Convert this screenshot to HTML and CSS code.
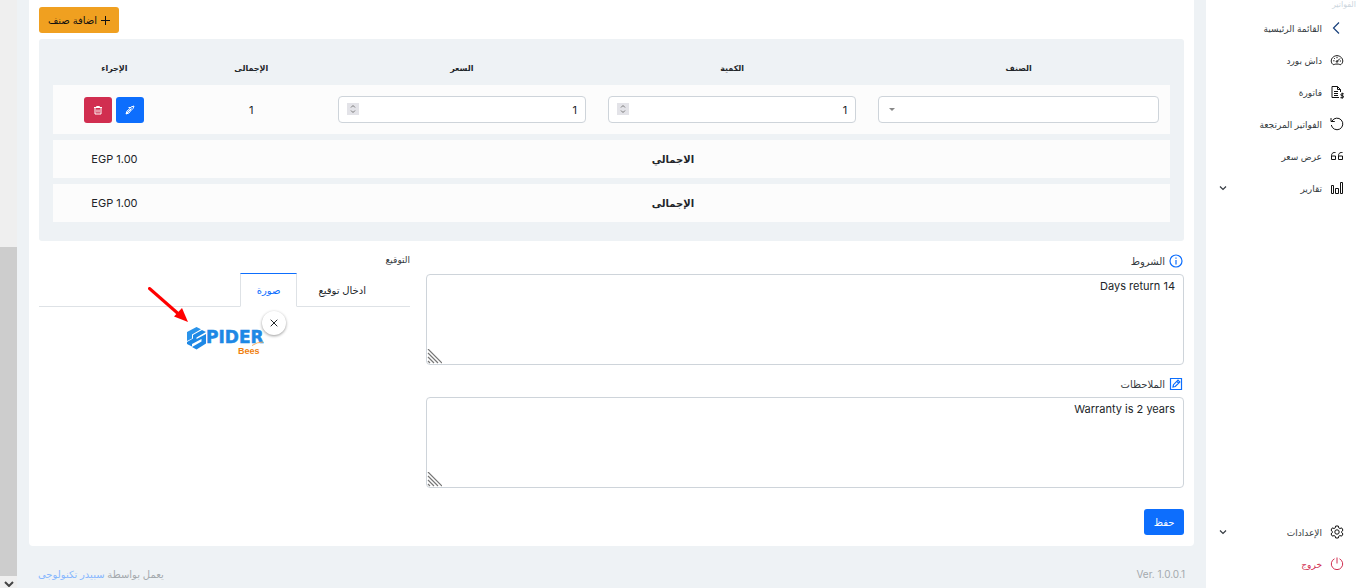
FILE: index.html
```html
<!DOCTYPE html>
<html lang="ar" dir="rtl">
<head>
<meta charset="utf-8">
<title>فاتورة</title>
<link rel="stylesheet" href="styles.css">
</head>
<body>
<aside class="sidebar">
  <p class="sidebar-title">الفواتير</p>
  <nav class="nav">
    <a class="nav-link" href="#"><svg class="icon blue" viewBox="0 0 14 14"><path d="M9 1.500L3.500 7 9 12.500"/></svg><span>القائمة الرئيسية</span></a>
    <a class="nav-link" href="#"><svg class="icon" viewBox="0 0 14 14"><path d="M3 11.500C.5 9.500 1 6.300 2.500 4.700 5 2 9 2 11.500 4.700c1.500 1.600 2 4.800-.5 6.800-.8.500-1.500-.5-4-.5s-3.200 1-4 .5zM7 8.500l3-3M3.200 7.800h1.300M4.200 5.200l.8.800M7 4v1.200M9.800 8h1.200"/><circle cx="7" cy="8.500" r=".8"/></svg><span>داش بورد</span></a>
    <a class="nav-link" href="#"><svg class="icon" viewBox="0 0 14 14"><path d="M9 12.500H2v-11h5.500L10.500 4.500V7M7.500 1.500v3h3M4 6.500h4M4 8.500h4M4 10.500h4M13.800 8.800h-2c-1.300 0-1.300 1.900 0 1.900h.8c1.400 0 1.400 2 0 2h-2.200M12.200 7.700v6"/></svg><span>فاتورة</span></a>
    <a class="nav-link" href="#"><svg class="icon" viewBox="0 0 14 14"><path d="M2 4a5.800 5.800 0 1 1-.7 4M1 1v3.500h3.800"/></svg><span>الفواتير المرتجعة</span></a>
    <a class="nav-link" href="#"><svg class="icon" viewBox="0 0 14 14"><path d="M5.500 3.500H4.200C2.500 3.500 1.500 5 1.500 6.500v4h4v-3.500h-4M12.500 3.500h-1.300c-1.700 0-2.700 1.500-2.700 3v4h4v-3.500h-4"/></svg><span>عرض سعر</span></a>
    <a class="nav-link" href="#"><svg class="icon" viewBox="0 0 14 14"><path d="M1.500 4.500h2v8h-2zM5.500 7.500h3v5h-3zM10.500 1.500h2v11h-2z"/></svg><span>تقارير</span><svg class="chevron" viewBox="0 0 8 8"><path d="M1 2.500l3 3 3-3"/></svg></a>
  </nav>
  <nav class="nav nav-bottom">
    <a class="nav-link" href="#"><svg class="icon" viewBox="0 0 14 14"><path d="M5.700 1h2.600l.4 1.800 1.200.7 1.800-.6L13 5.200l-1.300 1.200v1.300L13 8.900l-1.300 2.200-1.800-.5-1.200.7-.4 1.700H5.700l-.4-1.700-1.200-.7-1.800.5L1 8.900l1.300-1.200V6.400L1 5.200l1.300-2.300 1.800.6 1.200-.7z"/><circle cx="7" cy="7" r="2.200"/></svg><span>الإعدادات</span><svg class="chevron" viewBox="0 0 8 8"><path d="M1 2.500l3 3 3-3"/></svg></a>
    <a class="nav-link danger" href="#"><svg class="icon" viewBox="0 0 14 14"><path d="M4.500 1.800a5.700 5.700 0 1 0 5 0M7 .5v6"/></svg><span>خروج</span></a>
  </nav>
</aside>

<div class="content">
  <main class="card">
    <div class="toolbar">
      <button class="btn btn-add" type="button"><svg class="icon-plus" viewBox="0 0 9 9"><path d="M4.500 0v9M0 4.500h9"/></svg>اضافة صنف</button>
    </div>
    <section class="panel">
      <table class="items">
        <thead>
          <tr><th class="col-item">الصنف</th><th class="col-num">الكمية</th><th class="col-num">السعر</th><th class="col-total">الإجمالى</th><th class="col-action">الإجراء</th></tr>
        </thead>
        <tbody>
          <tr class="item-row">
            <td><select class="field select" aria-label="الصنف"><option></option></select></td>
            <td><input class="field number" type="number" value="1" aria-label="الكمية"></td>
            <td><input class="field number" type="number" value="1" aria-label="السعر"></td>
            <td>1</td>
            <td>
              <div class="actions">
                <button class="btn btn-primary btn-icon" type="button" aria-label="تعديل"><svg class="icon-action" viewBox="0 0 10 10"><path d="M1 9l1-3 2-1.500L6 2l3-1-1 2.500L5.500 6 4 8zM3.500 2.500H6M4 4.500L5.500 6M1 9l5.500-5.500"/></svg></button>
                <button class="btn btn-danger btn-icon" type="button" aria-label="حذف"><svg class="icon-action" viewBox="0 0 10 10"><path d="M1 2.500h8M3.500 2.500v-1h3v1M2 2.500v6.500h6V2.500M4 4.500v3M6 4.500v3"/></svg></button>
              </div>
            </td>
          </tr>
          <tr class="sum-row"><th colspan="4">الاجمالي</th><td>EGP 1.00</td></tr>
          <tr class="sum-row"><th colspan="4">الإجمالى</th><td>EGP 1.00</td></tr>
        </tbody>
      </table>
    </section>

    <div class="details">
      <div class="notes">
        <label class="label" for="terms"><svg class="icon-label" viewBox="0 0 14 14"><circle cx="7" cy="7" r="6"/><path d="M7 6v4.500M7 3.500v1.200"/></svg>الشروط</label>
        <textarea class="area" id="terms">Days return 14</textarea>
        <label class="label" for="notes"><svg class="icon-label" viewBox="0 0 14 14"><path d="M1.500 1.500h11v11h-11zM4 10l.5-2.300L9 3.200l1.800 1.800-4.500 4.500zM7.800 4.400l1.800 1.800"/></svg>الملاحظات</label>
        <textarea class="area" id="notes">Warranty is 2 years</textarea>
      </div>
      <section class="signature">
        <h2 class="signature-title">التوقيع</h2>
        <div class="tabs" role="tablist">
          <button class="tab" type="button" role="tab">ادخال توقيع</button>
          <button class="tab active" type="button" role="tab" aria-selected="true">صورة</button>
        </div>
        <div class="preview">
          <svg class="logo" viewBox="0 0 78 30" role="img" aria-label="Spider Bees">
            <path fill="#2a93ea" d="M10.500 1l4.500 2.300L6 8.500v4L1 15V6z"/>
            <path fill="#1e88e5" d="M16 4l4 2-9.500 5.500v1.500l9.500-5v9.500L10.500 23.500 6 21l9.500-5.500V13L6 18v2.500L1 18v-2l6-3.500V9z"/>
            <text class="logo-name" x="20" y="17">PIDER</text>
            <text class="logo-sub" x="52" y="28">Bees</text>
            <path class="logo-web" d="M66 19.500q5-3.500 11-3.500"/>
          </svg>
          <button class="close" type="button" aria-label="إزالة"><svg class="icon-close" viewBox="0 0 8 8"><path d="M.7.7l6.600 6.600M7.300.7L.7 7.300"/></svg></button>
          <svg class="pointer" viewBox="0 0 40 36"><path class="shaft" d="M1.500 1.500L30 26.500"/><path class="head" d="M40 35l-14-5.500 8-8.500z"/></svg>
        </div>
      </section>
    </div>
    <button class="btn btn-primary btn-save" type="submit">حفظ</button>
  </main>
  <footer class="footer"><span>Ver. 1.0.0.1</span><span>يعمل بواسطة <a href="#">سبيدر تكنولوجى</a></span></footer>
</div>

<div class="scrollbar"><div class="scroll-thumb"></div><svg class="scroll-arrow" viewBox="0 0 10 6"><path d="M1 1l4 4 4-4"/></svg></div>
</body>
</html>
```
FILE: styles.css
```css
* { box-sizing: border-box; }
body {
  margin: 0;
  display: flex;
  min-height: 100vh;
  background: #eef2f5;
  color: #212529;
  font-family: Inter, "DejaVu Sans", sans-serif;
  font-size: 11px;
}
button, input, select, textarea { font: inherit; color: inherit; }
a { color: inherit; text-decoration: none; }
svg { flex: none; fill: none; stroke: currentColor; }

.sidebar {
  width: 155px;
  flex: none;
  display: flex;
  flex-direction: column;
  background: #fff;
  font-size: 9px;
}
.sidebar-title { margin: 0; padding: 0 5px; height: 12px; line-height: 9px; font-size: 8px; color: #ccd6de; }
.nav-link { display: flex; align-items: center; gap: 8px; height: 32px; padding-inline: 17px 13px; color: #343a40; }
.nav-bottom { margin-top: auto; padding-bottom: 8px; }
.icon { width: 14px; height: 14px; color: #111; }
.icon.blue { color: #18407c; stroke-width: 1.200; }
.chevron { width: 8px; height: 8px; margin-inline-start: auto; stroke-width: 1.200; }
.danger, .danger .icon { color: #d12e50; }

.content { flex: 1; min-width: 0; display: flex; flex-direction: column; padding: 0 12px; }
.card { background: #fff; border-radius: 0 0 4px 4px; padding: 7px 10px 11px; }
.toolbar { display: flex; justify-content: flex-end; margin-bottom: 6px; }
.btn {
  display: inline-flex;
  align-items: center;
  justify-content: center;
  gap: 4px;
  height: 26px;
  border: 0;
  border-radius: 3px;
  padding: 0 9px;
  font-size: 10px;
}
.btn-add { background: #f0a020; color: #111; }
.icon-plus { width: 9px; height: 9px; }
.btn-primary { background: #0d6efd; color: #fff; }
.btn-danger { background: #d12e50; color: #fff; }
.btn-icon { width: 28px; padding: 0; }
.icon-action { width: 10px; height: 10px; }

.panel { background: #eef2f5; border-radius: 3px; padding: 6px 14px 13px; }
.items { width: 100%; table-layout: fixed; border-collapse: separate; border-spacing: 0 6px; text-align: center; }
.items th, .items td { padding: 0 11px; }
.items thead th { height: 28px; padding-top: 6px; font-size: 8px; }
.items .col-item { width: 27.1%; }
.items .col-num { width: 24.2%; }
.items .col-total { width: 13.5%; }
.items .col-action { width: 11%; }
.items tbody tr { background: #fcfcfc; }
.item-row td { height: 49px; }
.sum-row th, .sum-row td { height: 38px; }
.sum-row th { font-size: 10px; }
.field {
  display: block;
  width: 100%;
  height: 27px;
  border: 1px solid #ced4da;
  border-radius: 4px;
  background: #fff;
  padding: 0 8px;
}
.select {
  appearance: none;
  background: #fff url("data:image/svg+xml,%3Csvg xmlns='http://www.w3.org/2000/svg' width='6' height='3'%3E%3Cpath d='M0 0h6L3 3z' fill='%23888'/%3E%3C/svg%3E") no-repeat 10px 11px;
}
.number::-webkit-inner-spin-button {
  appearance: none;
  opacity: 1;
  width: 12px;
  height: 12px;
  background: #e3e3e8 url("data:image/svg+xml,%3Csvg xmlns='http://www.w3.org/2000/svg' width='12' height='12' fill='none' stroke='%23777'%3E%3Cpath d='M4 4.500l2-2 2 2M4 7.500l2 2 2-2'/%3E%3C/svg%3E") no-repeat center;
}
.actions { display: flex; justify-content: center; gap: 4px; }

.details { display: grid; grid-template-columns: 758fr 371fr; gap: 16px; padding-top: 10px; }
.notes { display: flex; flex-direction: column; }
.label { display: flex; align-items: center; gap: 4px; height: 20px; margin-bottom: 3px; padding: 0 1px; font-size: 10px; color: #343a40; }
.icon-label { width: 14px; height: 14px; color: #0d6efd; stroke-width: 1.200; }
.area {
  display: block;
  width: 100%;
  height: 91px;
  margin-bottom: 9px;
  border: 1px solid #ced4da;
  border-radius: 4px;
  padding: 3px 8px;
  line-height: 16px;
  background: #fff;
}
.area::-webkit-resizer {
  background: url("data:image/svg+xml,%3Csvg xmlns='http://www.w3.org/2000/svg' width='15' height='15' stroke='%23777' stroke-width='1.200'%3E%3Cpath d='M1 0l14 14M1 4l10 10M1 8l6 6M1 12l2 2'/%3E%3C/svg%3E") no-repeat left bottom;
}
.signature-title { margin: 0; height: 22px; line-height: 18px; font-size: 9px; font-weight: 400; color: #343a40; }
.tabs { display: flex; gap: 4px; height: 34px; padding-inline-start: 27px; border-bottom: 1px solid #dee2e6; font-size: 10px; }
.tab { height: 34px; border: 1px solid transparent; background: none; padding: 0 16px; }
.tab.active { border-color: #0d6efd #dee2e6 #fff; background: #fff; color: #0d6efd; }
.preview { position: relative; display: flex; justify-content: center; padding-top: 19px; }
.logo { width: 78px; height: 30px; stroke: none; direction: ltr; }
.logo-name { font: 700 17px "DejaVu Sans", sans-serif; fill: #1e88e5; stroke: #1e88e5; stroke-width: .5; }
.logo-sub { font: 700 9px "Liberation Sans", sans-serif; fill: #f08010; }
.logo-web { stroke: #f3b06a; }
.close {
  position: absolute;
  top: 4px;
  left: calc(50% + 37px);
  width: 24px;
  height: 24px;
  display: grid;
  place-items: center;
  padding: 0;
  border: 0;
  border-radius: 50%;
  background: #fff;
  box-shadow: 0 1px 3px #0006;
}
.icon-close { width: 8px; height: 8px; }
.pointer { position: absolute; top: -20px; left: calc(50% - 77px); width: 40px; height: 36px; stroke: none; }
.shaft { stroke: #f00; stroke-width: 3; stroke-linecap: round; }
.head { fill: #f00; }
.btn-save { display: flex; width: 40px; margin-top: 12px; padding: 0; }

.footer { flex: 1; display: flex; align-items: center; justify-content: space-between; padding: 14px 9px 0; font-size: 10px; color: #a4a9ad; }
.footer a { color: #86b7fe; }

.scrollbar { width: 17px; flex: none; display: flex; flex-direction: column; align-items: center; justify-content: flex-end; gap: 5px; padding-bottom: 1px; background: #efefef; }
.scroll-thumb { width: 100%; height: 56%; background: #cdcdcd; }
.scroll-arrow { width: 10px; height: 6px; color: #444; stroke-width: 2; }
```
